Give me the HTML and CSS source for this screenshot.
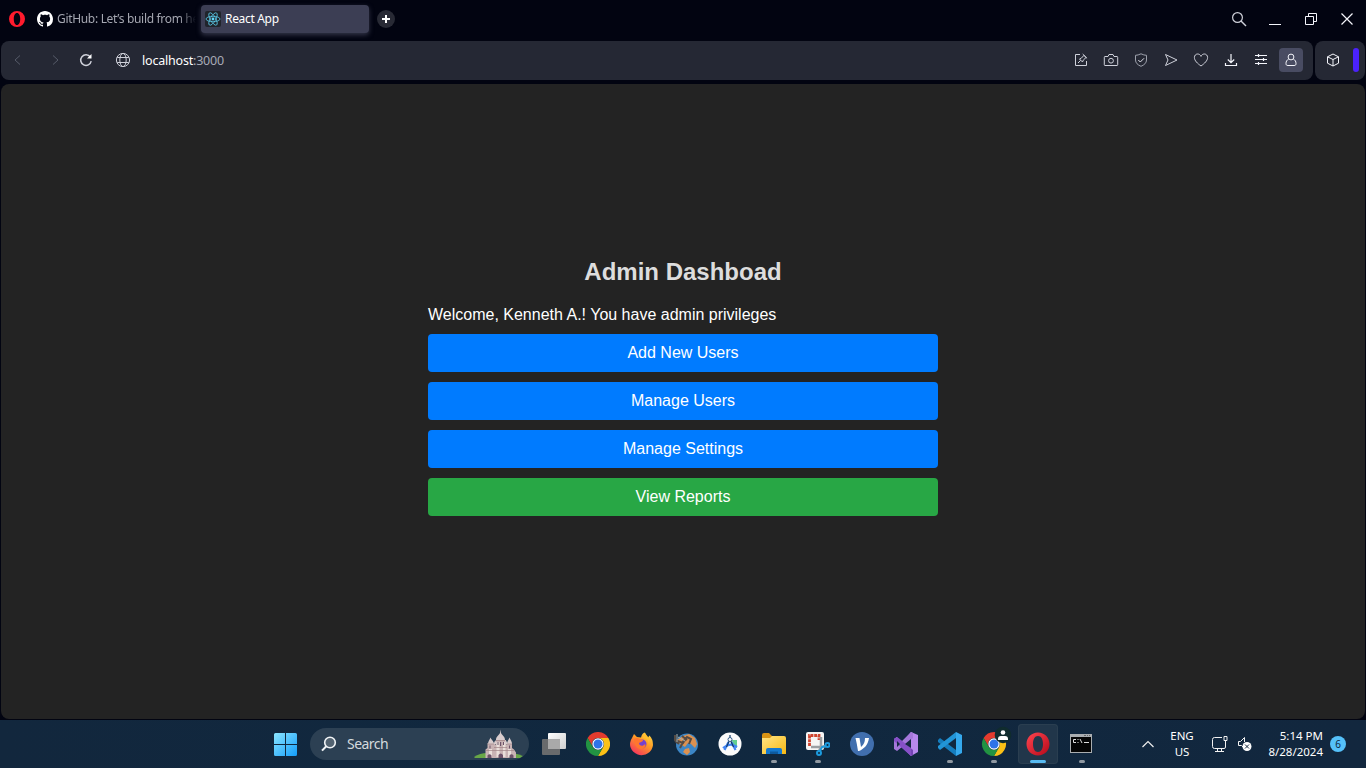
FILE: index.html
```html
<!DOCTYPE html>
<html lang="en">
<head>
<meta charset="utf-8">
<title>React App</title>
<link rel="stylesheet" href="styles.css">
</head>
<body>
<header class="tabs">
  <svg class="opera" width="18" height="18" viewBox="0 0 18 18"><path fill="#ff1b2d" fill-rule="evenodd" d="M9 1a8 8 0 1 0 0 16A8 8 0 0 0 9 1Zm0 2c2 0 3.200 2.600 3.200 6s-1.200 6-3.200 6-3.200-2.600-3.200-6S7 3 9 3Z"/></svg>
  <div class="tab tab-github">
    <svg width="16" height="16" viewBox="0 0 16 16" fill="#fff"><path d="M8 0C3.580 0 0 3.580 0 8c0 3.540 2.290 6.530 5.470 7.590.4.070.55-.17.55-.38 0-.19-.01-.82-.01-1.490-2.010.37-2.530-.49-2.690-.94-.09-.23-.48-.94-.82-1.130-.28-.15-.68-.52-.01-.53.63-.01 1.080.58 1.230.82.72 1.210 1.870.87 2.330.66.070-.52.28-.87.51-1.070-1.780-.2-3.640-.89-3.640-3.950 0-.87.31-1.590.82-2.150-.08-.2-.36-1.020.08-2.120 0 0 .67-.21 2.200.82.64-.18 1.320-.27 2-.27s1.360.09 2 .27c1.530-1.040 2.200-.82 2.200-.82.44 1.100.16 1.920.08 2.120.51.56.82 1.270.82 2.150 0 3.070-1.870 3.750-3.650 3.950.29.25.54.73.54 1.480 0 1.070-.01 1.930-.01 2.200 0 .21.15.46.55.38A8.010 8.010 0 0 0 16 8c0-4.420-3.580-8-8-8Z"/></svg>
    <span>GitHub: Let’s build from he</span>
  </div>
  <div class="tab tab-active">
    <svg width="16" height="16" viewBox="0 0 16 16"><rect width="16" height="16" rx="2" fill="#20242b"/><g fill="none" stroke="#61dafb" stroke-width=".8" opacity=".9"><ellipse cx="8" cy="8" rx="7" ry="2.700"/><ellipse cx="8" cy="8" rx="7" ry="2.700" transform="rotate(60 8 8)"/><ellipse cx="8" cy="8" rx="7" ry="2.700" transform="rotate(120 8 8)"/></g><circle cx="8" cy="8" r="1.400" fill="#61dafb"/></svg>
    <span>React App</span>
  </div>
  <div class="new-tab"><svg width="10" height="10" viewBox="0 0 10 10"><path d="M5 1v8M1 5h8" stroke="#fff" stroke-width="2"/></svg></div>
  <div class="window-buttons line">
    <span><svg width="16" height="16" viewBox="0 0 16 16"><circle cx="6.500" cy="6.500" r="4.900" stroke-width="1.200"/><path d="m10 10 5 5" stroke-width="1.400"/></svg></span>
    <span><svg class="bright" width="16" height="16" viewBox="0 0 16 16"><path d="M2 13.500h12"/></svg></span>
    <span><svg class="bright" width="16" height="16" viewBox="0 0 16 16"><path d="M2.500 5.500h8v8h-8zM5.500 5V2.500h8v8H11"/></svg></span>
    <span><svg class="bright" width="16" height="16" viewBox="0 0 16 16"><path stroke-width="1.200" d="m2.500 2.500 11 11m0-11-11 11"/></svg></span>
  </div>
</header>
<div class="toolbar-row">
  <div class="toolbar">
    <div class="nav line">
      <svg class="dim" width="16" height="16" viewBox="0 0 16 16"><path d="m10 3.500-5 4.500 5 4.500"/></svg>
      <svg class="dim" width="16" height="16" viewBox="0 0 16 16"><path d="m6 3.500 5 4.500-5 4.500"/></svg>
      <svg class="reload" width="16" height="16" viewBox="0 0 16 16"><path stroke-width="1.500" d="M12.300 5A5.300 5.300 0 1 0 13.200 9.200"/><path d="M13.500 2v4.500H9Z" fill="#fff" stroke="none"/></svg>
      <svg class="globe" width="16" height="16" viewBox="0 0 16 16"><circle cx="8" cy="8" r="6.600"/><ellipse cx="8" cy="8" rx="3.200" ry="6.600"/><path d="M2.200 5.500h11.600M2.200 10.500h11.600"/></svg>
    </div>
    <div class="url"><b>localhost</b>:3000</div>
    <div class="actions line">
      <span><svg width="16" height="16" viewBox="0 0 16 16"><path d="M7 2.500H2.500v11h11V9M5 11l2.700-2.700M6.500 7l3 3 .8-1.900L13 5.500 11 3.300 8.300 6.200ZM9.700 2l4.400 4.400"/></svg></span>
      <span><svg width="16" height="16" viewBox="0 0 16 16"><path d="M2 4.500h3l1-2h4l1 2h3q.7 0 .7.800v7.400q0 .8-.7.800H2q-.7 0-.7-.8V5.300q0-.8.700-.8Z"/><circle cx="8" cy="8.700" r="2.400"/></svg></span>
      <span><svg class="muted" width="16" height="16" viewBox="0 0 16 16"><path d="M8 1.800q3 1.500 5.500 1.500V8c0 3-2.300 5-5.500 6.300C4.800 13 2.500 11 2.500 8V3.300Q5 3.300 8 1.800Z"/><path stroke="#e0e2ea" d="m5.300 8 2 2L11 6.300"/></svg></span>
      <span><svg width="16" height="16" viewBox="0 0 16 16"><path d="M2.500 2.500 14 8 2.500 13.500 5 8Z" stroke-linejoin="round"/></svg></span>
      <span><svg width="16" height="16" viewBox="0 0 16 16"><path d="M8 14C4.500 11.500 1.400 8.600 1.400 5.500 1.400 3.500 2.800 2 4.600 2 6.100 2 7.400 2.900 8 4.400 8.600 2.900 9.900 2 11.400 2c1.800 0 3.200 1.500 3.200 3.500C14.600 8.600 11.500 11.500 8 14Z"/></svg></span>
      <span><svg class="bright" width="16" height="16" viewBox="0 0 16 16"><path stroke-width="1.200" d="M8 2v8.500M4.800 7.500 8 10.700l3.200-3.200M2.500 11v2.500h11V11"/></svg></span>
      <span><svg class="bright" width="16" height="16" viewBox="0 0 16 16"><path stroke-width="1.200" d="M2 3.500h12M2 7.500h12M2 11.500h12M5.500 2v3M10.500 6v3M5.500 10v3"/></svg></span>
      <span class="profile"><svg class="bright" width="16" height="16" viewBox="0 0 16 16"><circle cx="8" cy="5" r="2.900"/><path d="M5.700 7C3.800 8 3 9.500 3 11.500c0 1.500.5 2 2 2h6c1.500 0 2-.5 2-2 0-2-.8-3.500-2.700-4.500"/></svg></span>
    </div>
  </div>
  <div class="side line">
    <svg class="bright" width="16" height="16" viewBox="0 0 16 16"><path d="m8 2 5.500 2.800v6.400L8 14l-5.500-2.800V4.800ZM2.500 4.800 8 7.500l5.500-2.700M8 7.500V14"/></svg>
    <i class="accent"></i>
  </div>
</div>
<main class="page">
  <section class="dashboard">
    <h2>Admin Dashboad</h2>
    <p>Welcome, Kenneth A.! You have admin privileges</p>
    <button>Add New Users</button>
    <button>Manage Users</button>
    <button>Manage Settings</button>
    <button class="green">View Reports</button>
  </section>
</main>
<footer class="taskbar">
  <svg class="start" width="24" height="24" viewBox="0 0 24 24"><defs><linearGradient id="win" x2="1" y2="1"><stop stop-color="#8be5ff"/><stop offset="1" stop-color="#139dfa"/></linearGradient></defs><path fill="url(#win)" d="M1.500 0H11v11H0V1.500Q0 0 1.500 0ZM12 0h9.500Q23 0 23 1.500V11H12ZM0 12h11v11H1.500Q0 23 0 21.500ZM12 12h11v9.500q0 1.500-1.500 1.500H12Z"/></svg>
  <div class="search">
    <svg width="16" height="16" viewBox="0 0 16 16" fill="#536371" stroke="#f1f4f6" stroke-width="1.600"><circle cx="9" cy="6.500" r="5.300"/><path d="m5.300 10.300-4.300 4.300" stroke-width="2"/></svg>
    <span>Search</span>
    <svg class="castle" width="50" height="32" viewBox="0 0 50 32"><path fill="#68a747" d="M0 29Q6 25 13 25H38Q44 26 49 28L46 30H1Z"/><path fill="#c9b3b4" d="M11.500 30v-8.500l2-1.500v-5h6.500l2 2V12h10v5l1-2h5v5l2 1.500 2 3V30Z"/><path fill="#eadfda" d="M15 29v-8h3v8zM22.500 29V14h3v15zM29 29V14h2.500v15zM34 29v-8h3v8z"/><path fill="#d9cccd" d="M22 12c0-3.500 2.500-4.500 4-7l.5-3.500.5 3.500c1.500 2.500 4 3.500 4 7ZM14 16c0-3 1.500-3.500 2.500-6.500C17.500 12.500 20 13 20 16ZM33 16c0-3 1.500-3.500 2.500-6.500 1 3 2.500 3.500 2.500 6.500ZM20 16c0-2 .8-2.500 1.300-4 .6 1.500 1.400 2 1.400 4ZM30.500 16c0-2 .8-2.500 1.300-4 .6 1.500 1.400 2 1.400 4Z"/><path fill="#6d5269" d="M13.500 30v-2.500q2-2.500 4 0V30ZM24.500 30v-3q2.200-3 4.500 0v3ZM35.500 30v-2.500q2-2.500 4 0V30ZM15.500 17.500h1v3h-1zM23.500 14h1v3h-1zM26 14h1.200v4H26zM29 14h1v3h-1zM35 17.500h1v3h-1z"/><path stroke="#a08487" stroke-width=".7" d="M12 22.500h28M20 19.500h13M22 12.500h9M14 16h6M33 16h5"/></svg>
  </div>
  <nav class="apps">
    <span><svg width="24" height="24" viewBox="0 0 24 24"><defs><linearGradient id="paper" x2="1" y2="1"><stop stop-color="#fff"/><stop offset="1" stop-color="#cecece"/></linearGradient></defs><rect y="7" width="18" height="16" rx="1" fill="#686a6c"/><rect x="6" y="1" width="18" height="16" rx="1" fill="url(#paper)"/><path d="M6 7h12v10H6z" fill="#a9a9a9"/></svg></span>
    <span><svg width="24" height="24" viewBox="0 0 24 24"><g id="chrome"><path fill="#e33b2e" d="M1.600 6A12 12 0 0 1 22.400 6H12a6 6 0 0 0-5.200 9Z"/><path fill="#fbc116" d="M22.400 6A12 12 0 0 1 12 24l5.200-9A6 6 0 0 0 12 6Z"/><path fill="#229342" d="M1.600 6A12 12 0 0 0 12 24l5.200-9A6 6 0 0 1 6.800 15Z"/><circle cx="12" cy="12" r="5.700" fill="#fff"/><circle cx="12" cy="12" r="4.500" fill="#2e73e8"/></g></svg></span>
    <span><svg width="24" height="24" viewBox="0 0 24 24"><defs><linearGradient id="fox" x1="1" x2=".3" y2="1"><stop stop-color="#ffe54b"/><stop offset=".48" stop-color="#ff9b24"/><stop offset="1" stop-color="#f5365c"/></linearGradient></defs><path fill="url(#fox)" d="M2 6 4 2l3 3 4 .5Q12 1 15 .5q0 3 3 5l1.500-2Q23 7 23 13A11.500 11 0 1 1 2 6Z"/><circle cx="12" cy="12" r="4.500" fill="#7542cf"/><path fill="#ff762e" d="M4 7q3-2 6 0l3 1c0 2-3 2-4 3 0 3 4 4 6 1 2 3-2 6-5 5-4-1-6-5-6-10Z"/><path fill="#ffbf2e" d="M13 6q6 0 6 7 1-4-1-8l-3-4Z"/></svg></span>
    <span><svg width="24" height="24" viewBox="0 0 24 24"><circle cx="13" cy="12.500" r="11" fill="#3c86c6"/><path fill="#dc9150" d="m9 4 6-2 6 4 2 6-2 4-4-4-3-1-3 4-5-3-3-4ZM11 17l4-1 1 4-3 3-4-3Z"/><path fill="none" stroke="#554b44" stroke-width="2" d="M1 3v5l8 3 4-6 4 2-2 5M1 9l4 3M10 8l-4 8M8 4l5 4"/><path stroke="#a7b1b1" d="M3 2v8M4 5l7 4"/></svg></span>
    <span><svg width="24" height="24" viewBox="0 0 24 24"><circle cx="12" cy="12" r="11.500" fill="#fbfbfb"/><path fill="#63ce91" d="m14 8 5 0v8l-4-2Z"/><path d="m10.500 10-4 8m7-8 4 8M5 16q7-6 14-1" stroke="#4285f4" stroke-width="2.200" fill="none"/><path d="m12 7-3.500 8M12 7l3.500 8M12 3v4" stroke="#123b66" stroke-width="1.200"/><circle cx="12" cy="7.500" r="2" fill="#fff" stroke="#315b89"/></svg></span>
    <span class="open"><svg width="24" height="24" viewBox="0 0 24 24"><defs><linearGradient id="folder" x2="1" y2="1"><stop stop-color="#ffe586"/><stop offset="1" stop-color="#f7b913"/></linearGradient></defs><path fill="#d99414" d="M0 3q0-2 2-2h5l3 3h5v7H0Z"/><path fill="url(#folder)" d="M0 6h8l2-2h12q2 0 2 2v16H0Z"/><path fill="#1479cf" d="M4 22v-4q0-2 2-2h12q2 0 2 2v4Z"/><path fill="#0d5a9e" d="M8 19.500h8V22H8z"/></svg></span>
    <span class="open"><svg width="24" height="24" viewBox="0 0 24 24"><rect width="18" height="18" rx="2" fill="#f5f5f5"/><path d="M3.500 14V3.500H13V8" fill="none" stroke="#cf432e" stroke-width="2.800" stroke-dasharray="3 .8"/><path d="M15 5v10l-2 4M5 15h10l5-1" fill="none" stroke="#9b9fa3" stroke-width="2.500"/><g fill="none" stroke="#1c9bdf" stroke-width="2"><circle cx="13" cy="21" r="2"/><circle cx="21.500" cy="13" r="2"/><path d="m14 19 2-4 4-1"/></g></svg></span>
    <span><svg width="24" height="24" viewBox="0 0 24 24"><circle cx="12" cy="12" r="12" fill="#416fae"/><path fill="#fff" d="M5.500 6h4l1.500 9q4-3 4-9h4c-1 7-5 11-10 13H8Q7 12 5.500 6Z"/></svg></span>
    <span><svg width="24" height="24" viewBox="0 0 24 24"><path fill="#b788ed" d="m17 0 7 3v17l-7 4-4-4V5Z"/><path fill="#7443b5" d="m0 7 3-2 16 13v5l-2 1L1 9Z"/><path fill="#a477da" d="M0 7v10l3 2L19 6V1l-2-1L3 14V5Z"/><path fill="#8650c7" d="m0 7 3-2 14 11v8L0 9Z"/><path fill="#142840" d="m3 9 3 3-3 3Zm14-2v9l-6-4Z"/></svg></span>
    <span class="open"><svg width="24" height="24" viewBox="0 0 24 24"><path fill="#157dbe" d="m0 8 2-2 16 12v6L0 10Z"/><path fill="#2295d7" d="m0 16 2 2L18 6V0L0 14Z"/><path fill="#35a9ed" d="m18 0 6 3v18l-6 3Z"/></svg></span>
    <span class="open"><svg class="chrome-user" width="30" height="30" viewBox="0 0 30 30"><use href="#chrome" x="3" y="5"/><circle cx="24" cy="8" r="8.300" fill="#102c2e"/><circle cx="24" cy="5.500" r="2.300" fill="#fff"/><path d="M19 13v-1q0-3 3-3h4q3 0 3 3v1Z" fill="#fff"/></svg></span>
    <span class="open current"><svg width="24" height="24" viewBox="0 0 24 24"><defs><linearGradient id="red" x2="1" y2="1"><stop stop-color="#ff4650"/><stop offset="1" stop-color="#b50819"/></linearGradient></defs><path fill="url(#red)" fill-rule="evenodd" d="M12 .5C5.500.5.500 5.500.500 12S5.500 23.500 12 23.500 23.500 18.500 23.500 12 18.500.5 12 .5Zm0 3.500c3.300 0 5 3.400 5 8s-1.700 8-5 8-5-3.400-5-8 1.700-8 5-8Z"/></svg></span>
    <span class="open"><svg width="24" height="24" viewBox="0 0 24 24"><path fill="#a9adb0" d="M0 2h22v19H0z"/><path fill="#050505" d="M1 5h20v15H1z"/><path stroke="#555" stroke-width=".8" d="M14 3.500h2m1 0h1m1 0h1"/><g fill="none" stroke="#ddd"><path d="M6 7.500H3.500v3H6M8 7v1m0 2v1m2-4 2 4M14 10.500h5"/></g></svg></span>
  </nav>
  <div class="tray">
    <svg class="chevron" width="14" height="14" viewBox="0 0 14 14"><path d="m1.500 10 5.500-5.500 5.500 5.500" fill="none" stroke="#eee" stroke-width="1.200"/></svg>
    <div class="lang">ENG<br>US</div>
    <svg class="network" width="18" height="18" viewBox="0 0 18 18" fill="none" stroke="#f2f2f2"><path d="M11 2.500H3.500q-2 0-2 2v7q0 2 2 2h9.500q1.500 0 1.500-1.500V8M4 16.500h9M6.500 14v2M10.500 14v2M13 1.500h3v4h-3zM14.500 6v6"/></svg>
    <svg class="sound" width="16" height="16" viewBox="0 0 16 16"><path d="M7 12 4.500 9.500H1.500v-4h2l4-4V6" fill="none" stroke="#f2f2f2"/><circle cx="10" cy="10.500" r="4.500" fill="#fff"/><path d="m8 8.500 4 4m0-4-4 4" stroke="#14283d"/></svg>
    <div class="clock">5:14 PM<br>8/28/2024</div>
    <div class="badge">6</div>
  </div>
</footer>
</body>
</html>
```
FILE: styles.css
```css
* { box-sizing: border-box; }
body {
  width: 1366px;
  height: 768px;
  margin: 0;
  overflow: hidden;
  display: flex;
  flex-direction: column;
  background: #020411;
  color: #fff;
  font-family: "Noto Sans", sans-serif;
  font-size: 12px;
}
svg { display: block; flex: none; }
.line svg { fill: none; stroke: #cfd1da; stroke-width: 1; }
.line .bright { stroke: #f4f5fb; }
.line .muted { stroke: #9da1ac; }
.line .dim { stroke: #565b69; }
.tabs { height: 41px; display: flex; padding: 5px 1px 0 8px; }
.opera { margin-top: 5px; }
.tab { height: 28px; padding-bottom: 1px; display: flex; align-items: center; white-space: nowrap; }
.tab-github { width: 158px; margin-left: 11px; gap: 4px; color: #a5a7b1; letter-spacing: -.32px; }
.tab-github span { width: 139px; mask-image: linear-gradient(90deg, #000 88%, transparent); }
.tab-active { width: 168px; margin-left: 6px; padding-left: 4px; gap: 4px; border-radius: 4px; background: #3c3e54; box-shadow: 0 2px 5px #34364a; letter-spacing: -.32px; }
.new-tab { width: 18px; height: 18px; margin: 5px 0 0 8px; display: flex; align-items: center; justify-content: center; border-radius: 50%; background: #282a35; }
.window-buttons { margin-left: auto; display: flex; height: 28px; }
.window-buttons span { width: 36px; display: flex; align-items: center; justify-content: center; }
.toolbar-row { display: flex; gap: 2px; padding: 0 1px; height: 39px; }
.toolbar { width: 1312px; display: flex; align-items: center; padding: 0 10px 1px 9px; border-radius: 8px; background: #252834; }
.nav { display: flex; align-items: center; }
.nav svg + svg { margin-left: 21px; }
.nav .reload { margin-left: 15px; }
.nav .globe { margin-left: 21px; }
.url { margin-left: 11px; color: #a7aab6; font-size: 12.500px; letter-spacing: -.2px; }
.url b { color: #fff; font-weight: 400; }
.actions { margin-left: auto; display: flex; gap: 6px; }
.actions span { width: 24px; height: 24px; display: flex; align-items: center; justify-content: center; }
.actions .profile { border-radius: 4px; background: #494c62; }
.side { width: 50px; display: flex; align-items: center; padding: 0 0 1px 10px; border-radius: 8px; background: #252834; }
.accent { width: 6px; height: 24px; margin-left: 12px; border-radius: 3px; background: #4b22fb; }
.page { height: 635px; margin: 4px 1px 0; display: flex; justify-content: center; border-radius: 8px; background: #232323; font-family: "Liberation Sans", Arial, sans-serif; }
.dashboard { width: 510px; padding-top: 174px; }
.dashboard h2 { margin: 0; color: #ddd; text-align: center; font-size: 24px; line-height: 28px; }
.dashboard p { margin: 19px 0 9px; font-size: 16px; line-height: 20px; }
.dashboard button { display: block; width: 100%; height: 38px; margin: 0 0 10px; padding: 0 0 1px; border: 0; border-radius: 4px; background: #007bff; color: #fff; font: 16px "Liberation Sans", Arial, sans-serif; }
.dashboard .green { background: #28a745; }
.taskbar { height: 48px; margin-top: 1px; display: flex; align-items: center; background: linear-gradient(90deg, #12273d, #10283f 50%, #12273e); }
.start { margin: 1px 0 0 274px; }
.search { width: 219px; height: 32px; margin-left: 12px; display: flex; align-items: center; padding-left: 11px; border-radius: 16px; background: #2c4053; color: #d4dade; font-size: 14px; letter-spacing: -.55px; overflow: hidden; }
.search span { margin-left: 10px; line-height: 20px; }
.castle { margin-left: auto; margin-right: 5px; }
.apps { display: flex; margin-left: 3px; }
.apps span { position: relative; width: 44px; height: 48px; display: flex; align-items: center; justify-content: center; }
.apps .open::after { content: ""; position: absolute; bottom: 5px; width: 6px; height: 3px; border-radius: 2px; background: #9199a2; }
.chrome-user { margin-top: -4px; overflow: visible; }
.apps .current { width: 40px; height: 40px; margin: 4px 2px; border-radius: 4px; background: #21364a; box-shadow: inset 0 0 0 1px #2a3e50; }
.apps .current::after { bottom: 1px; width: 16px; background: #58bbf2; }
.tray { margin-left: auto; display: flex; align-items: center; padding-right: 20px; font-size: 11.500px; line-height: 16px; }
.lang { width: 32px; margin-left: 11px; text-align: center; }
.network { margin-left: 13px; }
.sound { margin-left: 8px; }
.clock { width: 58px; margin-left: 12px; text-align: right; white-space: nowrap; }
.badge { width: 16px; height: 16px; margin-left: 7px; border-radius: 50%; background: #55c1fa; color: #10283f; font-size: 10px; text-align: center; }
```
